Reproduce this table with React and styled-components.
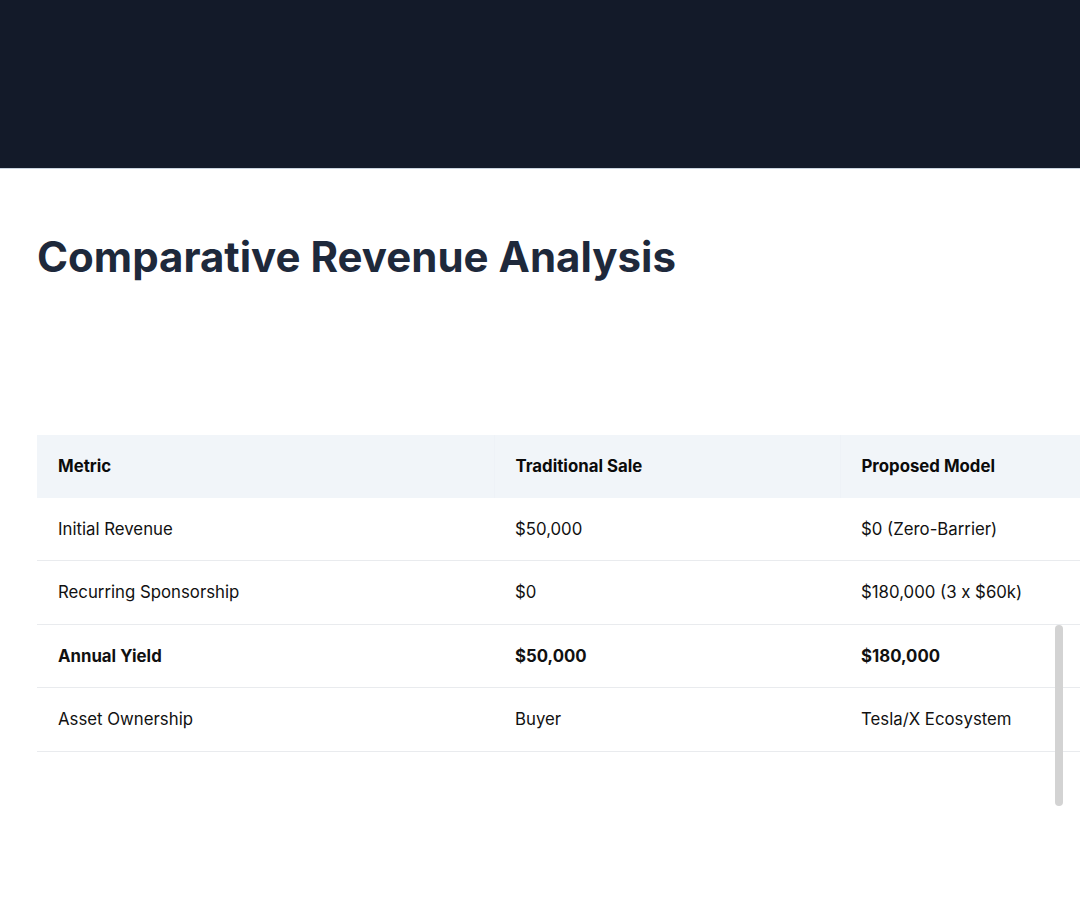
import React from "react";
import styled, { createGlobalStyle } from "styled-components";

const GlobalStyle = createGlobalStyle`
  html, body {
    margin: 0;
    padding: 0;
    background: #ffffff;
    overflow: hidden;
  }
  body {
    font-family: Inter, "Noto Sans", "Liberation Sans", sans-serif;
    color: #111111;
  }
`;

const Page = styled.div`
  position: relative;
  width: 1080px;
  height: 905px;
  overflow: hidden;
  background: #ffffff;
`;

const Hero = styled.header`
  height: 168px;
  background: #131a29;
  border-bottom: 1px solid #c9d3de;
`;

const Section = styled.section`
  padding: 63px 0 0 37px;
`;

const Title = styled.h1`
  margin: 0;
  font-size: 42px;
  line-height: 50px;
  font-weight: 700;
  color: #1e293b;
  white-space: nowrap;
`;

const TableWrap = styled.div`
  margin-top: 153px;
`;

const Table = styled.table`
  width: 1151px;
  table-layout: fixed;
  border-collapse: collapse;
  font-size: 16.8px;
  line-height: 20.5px;
`;

const HeadCell = styled.th`
  box-sizing: border-box;
  width: ${(p) => p.$w}px;
  padding: 21px;
  text-align: left;
  font-weight: 700;
  color: #0b0b0b;
  background: #f1f5f9;
  border-right: 1px solid #eef2f7;
  white-space: nowrap;
`;

const Row = styled.tr`
  border-bottom: 1px solid #e9ebee;
`;

const Cell = styled.td`
  box-sizing: border-box;
  padding: 21px;
  font-weight: ${(p) => (p.$strong ? 700 : 400)};
  color: #111111;
  white-space: nowrap;
`;

const ScrollThumb = styled.div`
  position: absolute;
  left: 1055px;
  top: 625px;
  width: 8px;
  height: 181px;
  border-radius: 4px;
  background: #d3d3d3;
`;

const columns = [
  { label: "Metric", width: 457 },
  { label: "Traditional Sale", width: 346 },
  { label: "Proposed Model", width: 348 },
];

const rows = [
  { cells: ["Initial Revenue", "$50,000", "$0 (Zero-Barrier)"] },
  { cells: ["Recurring Sponsorship", "$0", "$180,000 (3 x $60k)"] },
  { cells: ["Annual Yield", "$50,000", "$180,000"], strong: true },
  { cells: ["Asset Ownership", "Buyer", "Tesla/X Ecosystem"] },
];

export default function App() {
  return (
    <Page>
      <GlobalStyle />
      <Hero />
      <Section>
        <Title>Comparative Revenue Analysis</Title>
        <TableWrap>
          <Table>
            <thead>
              <tr>
                {columns.map((c) => (
                  <HeadCell key={c.label} $w={c.width}>
                    {c.label}
                  </HeadCell>
                ))}
              </tr>
            </thead>
            <tbody>
              {rows.map((r) => (
                <Row key={r.cells[0]}>
                  {r.cells.map((text, i) => (
                    <Cell key={i} $strong={r.strong}>
                      {text}
                    </Cell>
                  ))}
                </Row>
              ))}
            </tbody>
          </Table>
        </TableWrap>
      </Section>
      <ScrollThumb />
    </Page>
  );
}
